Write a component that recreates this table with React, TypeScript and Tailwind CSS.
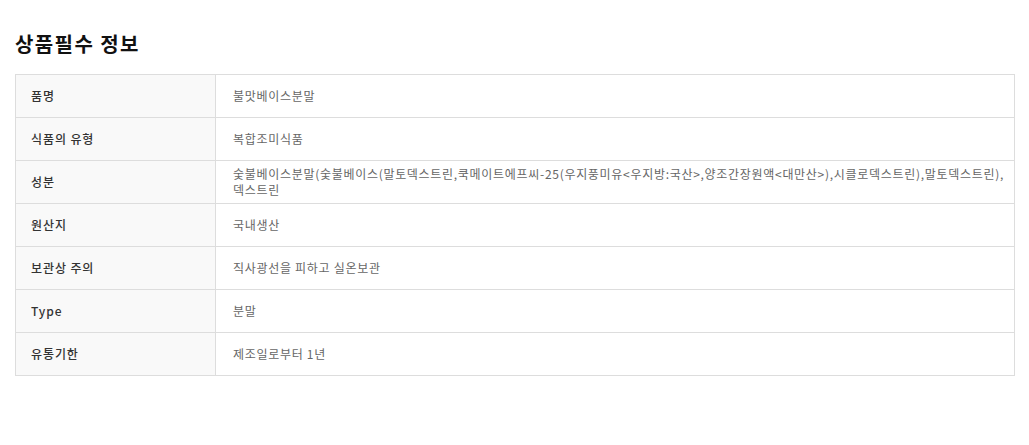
import React from "react";

const rows: [string, string][] = [
  ["품명", "불맛베이스분말"],
  ["식품의 유형", "복합조미식품"],
  [
    "성분",
    "숯불베이스분말(숯불베이스(말토덱스트린,쿡메이트에프씨-25(우지풍미유<우지방:국산>,양조간장원액<대만산>),시클로덱스트린),말토덱스트린),덱스트린",
  ],
  ["원산지", "국내생산"],
  ["보관상 주의", "직사광선을 피하고 실온보관"],
  ["Type", "분말"],
  ["유통기한", "제조일로부터 1년"],
];

export default function App() {
  return (
    <div
      className="bg-white w-[1029px] h-[445px] pt-[29px] pl-[15px]"
      style={{ fontFamily: '"Malgun Gothic", "Noto Sans CJK KR", sans-serif' }}
    >
      <h2 className="text-[20px] font-bold text-[#111] leading-[30px] tracking-[1.4px] m-0">상품필수 정보</h2>
      <div className="mt-[15px] w-[1000px] border border-[#dddddd] border-b-0">
        {rows.map(([k, v]) => (
          <div key={k} className="flex h-[43px] border-b border-[#dddddd]">
            <div className="w-[200px] shrink-0 bg-[#f9f9f9] border-r border-[#dddddd] flex items-center pl-[15px] text-[12px] tracking-[0.9px] font-medium text-[#333]">
              {k}
            </div>
            <div className="flex-1 flex items-center pl-[17px] pr-[10px] text-[12px] tracking-[0.7px] leading-[16px] text-[#666]">
              {v}
            </div>
          </div>
        ))}
      </div>
    </div>
  );
}
